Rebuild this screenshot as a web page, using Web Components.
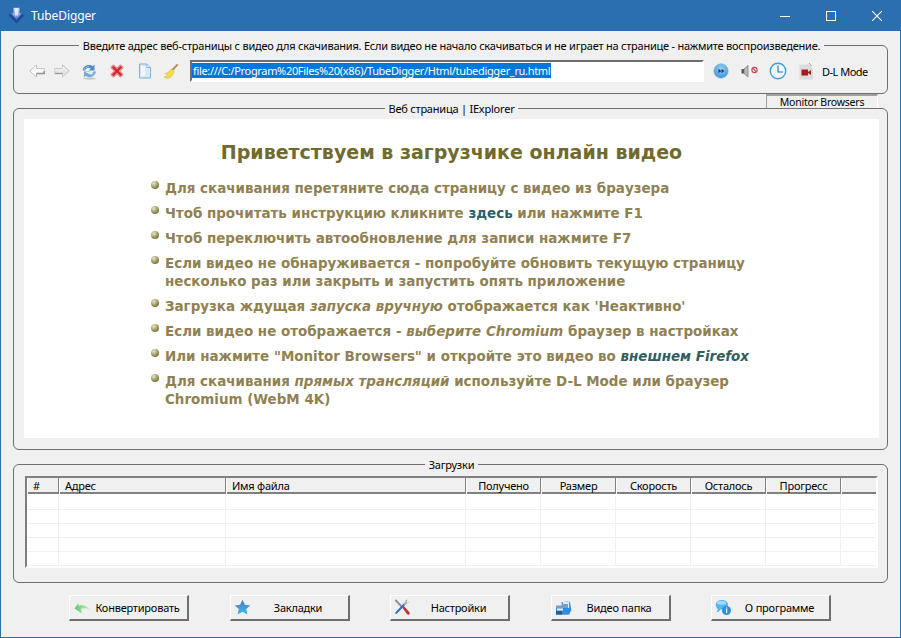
<!DOCTYPE html>
<html lang="ru">
<head>
<meta charset="utf-8">
<title>TubeDigger</title>
<style>
  html, body { margin: 0; height: 100%; overflow: hidden; }
  body { font: 11px/13px "Noto Sans", "DejaVu Sans", sans-serif; letter-spacing: -.22px; color: #000; }
</style>
</head>
<body>
<app-window>
  <title-bar slot="title">TubeDigger</title-bar>

  <group-box label="Введите адрес веб-страницы с видео для скачивания. Если видео не начало скачиваться и не играет на странице - нажмите воспроизведение.">
    <tool-bar url="file:///C:/Program%20Files%20(x86)/TubeDigger/Html/tubedigger_ru.html"></tool-bar>
  </group-box>

  <tab-strip>Monitor Browsers</tab-strip>

  <group-box label="Веб страница | IExplorer" class="web">
    <welcome-page></welcome-page>
  </group-box>

  <group-box label="Загрузки" class="downloads">
    <download-table></download-table>
  </group-box>

  <button-row>
    <bevel-button icon="convert">Конвертировать</bevel-button>
    <bevel-button icon="star">Закладки</bevel-button>
    <bevel-button icon="tools">Настройки</bevel-button>
    <bevel-button icon="folder">Видео папка</bevel-button>
    <bevel-button icon="about">О программе</bevel-button>
  </button-row>
</app-window>

<script>
// Все иконки в одном месте, рисуем сами (сети нет)
const ICONS = {
  logo: `<svg width="17" height="17" viewBox="0 0 17 17"><defs><linearGradient id="lg" x1="0" y1="0" x2="0" y2="1"><stop offset="0" stop-color="#d6e6fb"/><stop offset=".6" stop-color="#7fa9e6"/><stop offset="1" stop-color="#3f6fc4"/></linearGradient></defs><path d="M.5 8.500l3-2.500 5 4.500 5-4.500 3 2.500-8 8z" fill="#1f4c94"/><path d="M5.200 .5h6.600v5.500h2.400L8.500 13 2.800 6h2.400z" fill="url(#lg)" stroke="#3a63ad" stroke-width=".6"/><path d="M7 1.500h3v7H7z" fill="#eef5fe" opacity=".8"/></svg>`,
  back: `<svg width="16" height="14" viewBox="0 0 16 14"><path d="M7.500.8L.8 7l6.700 6V9.500h7.700v-5H7.500z" fill="#fafafa" stroke="#c4c4c4"/><path d="M7.500 9.500h7.700V7" fill="none" stroke="#8e8e8e" stroke-width="1.400"/><path d="M7.500 9.500V13" stroke="#b0b0b0"/></svg>`,
  forward: `<svg width="16" height="14" viewBox="0 0 16 14"><path d="M8.500.8L15.200 7l-6.700 6V9.500H.8v-5h7.700z" fill="#e4e4e4" stroke="#c6c6c6"/><path d="M1 6h8V3l4 4" fill="none" stroke="#f6f6f6"/><path d="M1 9.500h7.500" stroke="#9a9a9a" stroke-width="1.400"/></svg>`,
  refresh: `<svg width="17" height="17" viewBox="0 0 17 17"><ellipse cx="8.500" cy="15.500" rx="6.500" ry="1.200" fill="#c3c9d0"/><path d="M1.500 7.500C2 4 5 2 8 2c1.600 0 2.800.5 3.800 1.300L13.500 1.500v6h-5.800l2-2C9 5 8.300 4.800 7.600 4.800 6 4.800 4.700 5.900 4.300 7.500z" fill="#4f8ac6"/><path d="M15 8.500c-.5 3.500-3.500 5.500-6.500 5.500-1.600 0-2.800-.5-3.800-1.300L3 14.500v-6h5.800l-2 2c.7.500 1.400.7 2.100.7 1.600 0 2.900-1.100 3.300-2.700z" fill="#79a8d8"/><path d="M3 7c.600-2 2.500-3.500 4.800-3.500" fill="none" stroke="#a9cbeb" stroke-width=".9"/><path d="M5 9.500h4.500l-1 1c1.500 1 3 .7 4-.7" fill="none" stroke="#d9e9f7" stroke-width="1"/></svg>`,
  stop: `<svg width="16" height="16" viewBox="0 0 16 16"><path d="M3 4.500l3.500 3.500L3 11.500 4.500 13 8 9.500l3.500 3.500 1.500-1.500L9.500 8 13 4.500 11.500 3 8 6.500 4.500 3z" fill="#d8232a" stroke="#dc8f94" stroke-width="2.800" paint-order="stroke" stroke-linejoin="round"/></svg>`,
  page: `<svg width="14" height="16" viewBox="0 0 14 16"><path d="M1.500 1H9l3.500 3.500V15h-11z" fill="#d6ebf7" stroke="#7db2d4"/><path d="M9 1v3.500h3.500" fill="#f6fbfe" stroke="#7db2d4"/><path d="M3 3h4v10H3z" fill="#eef7fc"/></svg>`,
  broom: `<svg width="16" height="16" viewBox="0 0 16 16"><path d="M14 .8l1.300 1.200-5 5.600-1.600-1.400z" fill="#b58a4e"/><path d="M8 6l3 2.600c-.4 3-2.800 5.700-5.600 6.600-1 .3-3.800-.3-4.400-1.300 2.500-.5 3.400-1.700 3.700-2.400C3.200 11 2.500 10.800 2 10.600 4.500 10.200 6.800 8.600 8 6z" fill="#f2dc4f" stroke="#c9b035" stroke-width=".5"/></svg>`,
  play: `<svg width="16" height="16" viewBox="0 0 16 16"><defs><radialGradient id="pl" cx=".5" cy=".35" r=".7"><stop offset="0" stop-color="#9fd4f5"/><stop offset="1" stop-color="#2f8ed6"/></radialGradient></defs><circle cx="8" cy="8" r="7.200" fill="url(#pl)" stroke="#8ab6d6" stroke-width=".6"/><path d="M5.500 5.700L8.200 8l-2.700 2.300zM8.500 5.700L11.200 8l-2.700 2.300z" fill="#16385c"/></svg>`,
  mute: `<svg width="18" height="14" viewBox="0 0 18 14"><path d="M.5 5h2.500v4.500H.5z" fill="#555"/><path d="M3 5l4-3.500v11.500L3 9.500z" fill="#b9b9b9" stroke="#777" stroke-width=".7"/><circle cx="13.500" cy="6" r="2.600" fill="none" stroke="#c8404a" stroke-width="1.100"/><path d="M11.700 4.200l3.600 3.600" stroke="#c8404a" stroke-width="1.100"/></svg>`,
  clock: `<svg width="18" height="18" viewBox="0 0 18 18"><circle cx="9" cy="9" r="7.700" fill="#f2f9fe" stroke="#3f9ae0" stroke-width="1.400"/><path d="M9 3.500V10h5" fill="none" stroke="#1f6fb8" stroke-width="1.100"/></svg>`,
  video: `<svg width="16" height="18" viewBox="0 0 16 18"><path d="M1.500 2.500h9.500L15 6.500v11H1.500z" fill="#dcdcdc"/><path d="M11 1l2.500 3" stroke="#8a8a8a" stroke-width=".8"/><path d="M3.500 7.500h6.500v6H3.500zM10 10l3-2v5l-3-2z" fill="#a81b1f"/></svg>`,
  convert: `<svg width="16" height="12" viewBox="0 0 16 12"><defs><linearGradient id="cv" x1="0" y1="0" x2="1" y2="0"><stop offset="0" stop-color="#5ec868"/><stop offset="1" stop-color="#c2efc0"/></linearGradient></defs><path d="M.5 6.500L4.500 1v2.800C9.500 2.500 14 4 15.500 8 13 6 9.500 5.600 7 6.800L7.800 11.500z" fill="url(#cv)"/></svg>`,
  star: `<svg width="17" height="17" viewBox="0 0 17 17"><defs><linearGradient id="st" x1="0" y1="0" x2="0" y2="1"><stop offset="0" stop-color="#5a6f9e"/><stop offset=".55" stop-color="#3f9fe0"/><stop offset="1" stop-color="#2fc0f2"/></linearGradient></defs><path d="M8.500.8l2.300 5 5.500.6-4.100 3.700 1.200 5.500-4.900-2.800-4.900 2.800 1.200-5.500L.7 6.400l5.500-.6z" fill="url(#st)"/></svg>`,
  tools: `<svg width="17" height="17" viewBox="0 0 17 17"><path d="M1 .8L2.300.5l6 6.500-1.300 1.300-6-6.200z" fill="#8d8d8d"/><path d="M7.800 8l1.500-1.500 6 6.500c.7.900.4 1.900-.1 2.400s-1.500.5-2.100-.1z" fill="#c9302f"/><path d="M15.800 2.500L14 4l-1.300-.5-.2-1.300L14.200.8c-1.600-.5-3.200.6-3 2.300l-1.700 1.700 1.400 1.400 1.800-1.700c1.800.2 3-1.300 2.700-2z" fill="#a8a8a8"/><path d="M9.500 4.800l1.400 1.400-6.900 7.300c-.8 1-1.700 1.700-2.400 1.300-.7-.5-.3-1.500.5-2.400z" fill="#2e6fd0"/></svg>`,
  folder: `<svg width="17" height="16" viewBox="0 0 17 16"><path d="M6 2.500l6-1.500 3 1 1.500 9-4 3z" fill="#4a9be0"/><path d="M8 1.500h6v7H8z" fill="#d8ecfa"/><path d="M1 5.500h5l1-1.500h6v10.500H1z" fill="#7c9cc2"/><path d="M1 8h12.500L16 6.500l-1.500 8H1z" fill="#2e8de0"/><path d="M2 8.500h6v2H2z" fill="#e8f1f8"/><path d="M1 11h6v3.500H1z" fill="#33597f"/></svg>`,
  about: `<svg width="17" height="17" viewBox="0 0 17 17"><path d="M7 1c3.500 0 6 2 6 4.800s-2.500 4.800-6 4.800c-.6 0-1.200 0-1.700-.2C4.500 12 3 13 1.500 13c.8-.8 1.200-1.800 1.200-3C1.500 9 .8 7.500.8 5.800.8 3 3.500 1 7 1z" fill="#55b4ea"/><ellipse cx="6.500" cy="3.800" rx="4.500" ry="2" fill="#9ddcf7"/><circle cx="11.500" cy="11.500" r="4.500" fill="#2f8fd8"/><path d="M11 10h1.200v4H11zM11 8.500h1.200v1H11z" fill="#fff"/></svg>`
};

// Рамка окна: заголовок + содержимое с отступами
class AppWindow extends HTMLElement {
  constructor() {
    super();
    this.attachShadow({ mode: 'open' }).innerHTML = `
      <style>
        :host { display: flex; flex-direction: column; width: 901px; height: 638px; box-sizing: border-box;
                background: #f0f0f0; border: 1px solid #2b6fb0; border-top: 0; }
        .body { display: flex; flex-direction: column; padding: 8px 12px 0 12px; }
      </style>
      <slot name="title"></slot>
      <div class="body"><slot></slot></div>`;
  }
}

class TitleBar extends HTMLElement {
  constructor() {
    super();
    this.attachShadow({ mode: 'open' }).innerHTML = `
      <style>
        :host { display: flex; align-items: center; height: 31px; margin: 0 -1px; background: #2b6fb0; color: #fff;
                font: 12px "Noto Sans", sans-serif; letter-spacing: -.1px; padding-left: 8px; }
        .logo { display: flex; margin-right: 6px; }
        .name { flex: 1; }
        .ctl { display: flex; width: 46px; height: 31px; align-items: center; justify-content: center; }
        .ctls { display: flex; margin-right: 1px; }
      </style>
      <span class="logo">${ICONS.logo}</span>
      <span class="name"><slot></slot></span>
      <span class="ctls">
        <span class="ctl"><svg width="10" height="10"><path d="M0 5.500h10" stroke="#fff"/></svg></span>
        <span class="ctl"><svg width="10" height="10"><rect x=".5" y=".5" width="9" height="9" fill="none" stroke="#fff"/></svg></span>
        <span class="ctl"><svg width="10" height="10"><path d="M0 0l10 10M10 0L0 10" stroke="#fff" stroke-width="1.100"/></svg></span>
      </span>`;
  }
}

class GroupBox extends HTMLElement {
  constructor() {
    super();
    this.attachShadow({ mode: 'open' }).innerHTML = `
      <style>
        :host { display: block; }
        fieldset { margin: 0; border: 1px solid #6e6e6e; border-radius: 6px; padding: var(--pad, 8px 8px 11px 10px); min-width: 0; }
        legend { margin: 0 auto; padding: 0 4px; height: 13px; line-height: 13px; white-space: nowrap; }
      </style>
      <fieldset><legend>${this.getAttribute('label')}</legend><slot></slot></fieldset>`;
    if (this.classList.contains('web')) this.style.setProperty('--pad', '4px 8px 11px 10px');
    if (this.classList.contains('downloads')) {
      this.style.setProperty('--pad', '5px 9px 14px 11px');
      this.style.marginTop = '8px';
    }
  }
}

class ToolBar extends HTMLElement {
  constructor() {
    super();
    const icon = (name, w) => `<span class="ic" style="width:${w}px">${ICONS[name]}</span>`;
    this.attachShadow({ mode: 'open' }).innerHTML = `
      <style>
        :host { display: flex; align-items: center; height: 22px; }
        .ic { display: flex; justify-content: center; align-items: center; flex: none; }
        .url { width: 514px; height: 22px; box-sizing: border-box; margin: 0 4px 0 0; background: #fff; flex: none;
               border: 2px solid; border-color: #6e6e6e #fff #fff #6e6e6e; outline: 0; padding: 1px 0 0 0;
               display: flex; }
        .sel { background: #0078d7; color: #fff; height: 15px; line-height: 15px; padding: 0 1px;
               letter-spacing: -.33px; white-space: nowrap; }
        .dl { margin-left: 0; letter-spacing: -.5px; white-space: nowrap; }
      </style>
      ${icon('back', 25)}${icon('forward', 25)}${icon('refresh', 30)}${icon('stop', 26)}${icon('page', 29)}${icon('broom', 24)}
      <span style="width:7px;flex:none"></span>
      <div class="url"><span class="sel">${this.getAttribute('url')}</span></div>
      ${icon('play', 25)}${icon('mute', 33)}${icon('clock', 23)}${icon('video', 33)}
      <span class="dl">D-L Mode</span>`;
  }
}

class TabStrip extends HTMLElement {
  constructor() {
    super();
    this.attachShadow({ mode: 'open' }).innerHTML = `
      <style>
        :host { display: flex; justify-content: flex-end; height: 8px; padding-right: 10px; }
        .tab { box-sizing: border-box; width: 112px; height: 14px; text-align: center; line-height: 13px; font-size: 10.500px;
               border-top: 2px solid #a0a0a0; border-left: 1px solid #a0a0a0; border-right: 1px solid #fff; }
      </style>
      <div class="tab"><slot></slot></div>`;
  }
}

// Страница приветствия (встроенный браузер)
class WelcomePage extends HTMLElement {
  constructor() {
    super();
    const items = [
      'Для скачивания перетяните сюда страницу с видео из браузера',
      'Чтоб прочитать инструкцию кликните <a>здесь</a> или нажмите F1',
      'Чтоб переключить автообновление для записи нажмите F7',
      'Если видео не обнаруживается - попробуйте обновить текущую страницу<br>несколько раз или закрыть и запустить опять приложение',
      'Загрузка ждущая <i>запуска вручную</i> отображается как \'Неактивно\'',
      'Если видео не отображается - <i>выберите Chromium</i> браузер в настройках',
      'Или нажмите "Monitor Browsers" и откройте это видео во <i class="ext">внешнем Firefox</i>',
      'Для скачивания <i>прямых трансляций</i> используйте D-L Mode или браузер<br>Chromium (WebM 4K)'
    ];
    this.attachShadow({ mode: 'open' }).innerHTML = `
      <style>
        :host { display: block; height: 319px; box-sizing: border-box; background: #fff; padding-top: 21px;
                font-family: "DejaVu Sans", Verdana, sans-serif; letter-spacing: 0; }
        h1 { margin: 0 0 16px; text-align: center; font-size: 19px; line-height: 24px; font-weight: bold; color: #6f6a30; }
        ul { margin: 0; padding: 0 0 0 127px; list-style: none; display: flex; flex-direction: column; gap: 7px; }
        li { display: flex; font-size: 13.450px; line-height: 18px; font-weight: bold; color: #8f8152; white-space: nowrap; }
        .dot { width: 8px; height: 8px; border-radius: 50%; flex: none; margin: 1px 6px 0 0;
               background: radial-gradient(circle at 35% 30%, #e8e6c8, #8c8a50 60%, #55532c); }
        a { color: #2f5f63; }
        i.ext { color: #2f5f63; }
      </style>
      <h1>Приветствуем в загрузчике онлайн видео</h1>
      <ul>${items.map(t => `<li><span class="dot"></span><span>${t}</span></li>`).join('')}</ul>`;
  }
}

class DownloadTable extends HTMLElement {
  constructor() {
    super();
    const cols = [['#', 32, 'left'], ['Адрес', 167, 'left'], ['Имя файла', 240, 'left'], ['Получено', 75], ['Размер', 75],
                  ['Скорость', 75], ['Осталось', 75], ['Прогресс', 75], ['', 37]];
    const tracks = cols.map(c => c[1] + 'px').join(' ');
    const head = cols.map(c => `<div class="th ${c[2] || ''}">${c[0]}</div>`).join('');
    const row = '<div class="tr">' + cols.map(() => '<div class="td"></div>').join('') + '</div>';
    this.attachShadow({ mode: 'open' }).innerHTML = `
      <style>
        :host { display: block; height: 92px; box-sizing: border-box; background: #fff; overflow: hidden;
                border: 2px solid; border-color: #808080 #fff #fff #808080; }
        .head, .tr { display: grid; grid-template-columns: ${tracks}; }
        .head { height: 16px; box-sizing: border-box; background: #f0f0f0; border-bottom: 2px solid #808080; }
        .th { box-sizing: border-box; text-align: center; line-height: 16px; border-right: 1.500px solid #808080;
              border-left: 1px solid #fff; white-space: nowrap; }
        .th.left { text-align: left; padding-left: 5px; }
        .th:last-child { border-right: 0; }
        .body { padding-top: 2px; }
        .tr { height: 14px; box-sizing: border-box; border-bottom: 1px solid #f0f0f0; }
        .td { border-right: 1px solid #f0f0f0; }
      </style>
      <div class="head">${head}</div>
      <div class="body">${row.repeat(6)}</div>`;
  }
}

class ButtonRow extends HTMLElement {
  constructor() {
    super();
    this.attachShadow({ mode: 'open' }).innerHTML = `
      <style>:host { display: flex; gap: 40.500px; margin-top: 12px; padding-left: 56px; }</style><slot></slot>`;
  }
}

class BevelButton extends HTMLElement {
  constructor() {
    super();
    this.attachShadow({ mode: 'open' }).innerHTML = `
      <style>
        :host { display: flex; align-items: center; box-sizing: border-box; width: 120px; height: 26px; background: #f0f0f0;
                border: 1px solid; border-color: #fff #6e6e6e #6e6e6e #fff; border-width: 1px 2px 2px 1px; }
        .ic { display: flex; width: 17px; margin-left: 3px; justify-content: center; flex: none; }
        .tx { flex: 1; text-align: center; white-space: nowrap; padding-right: 2px; }
      </style>
      <span class="ic">${ICONS[this.getAttribute('icon')]}</span>
      <span class="tx"><slot></slot></span>`;
  }
}

customElements.define('app-window', AppWindow);
customElements.define('title-bar', TitleBar);
customElements.define('group-box', GroupBox);
customElements.define('tool-bar', ToolBar);
customElements.define('tab-strip', TabStrip);
customElements.define('welcome-page', WelcomePage);
customElements.define('download-table', DownloadTable);
customElements.define('button-row', ButtonRow);
customElements.define('bevel-button', BevelButton);
</script>
</body>
</html>
